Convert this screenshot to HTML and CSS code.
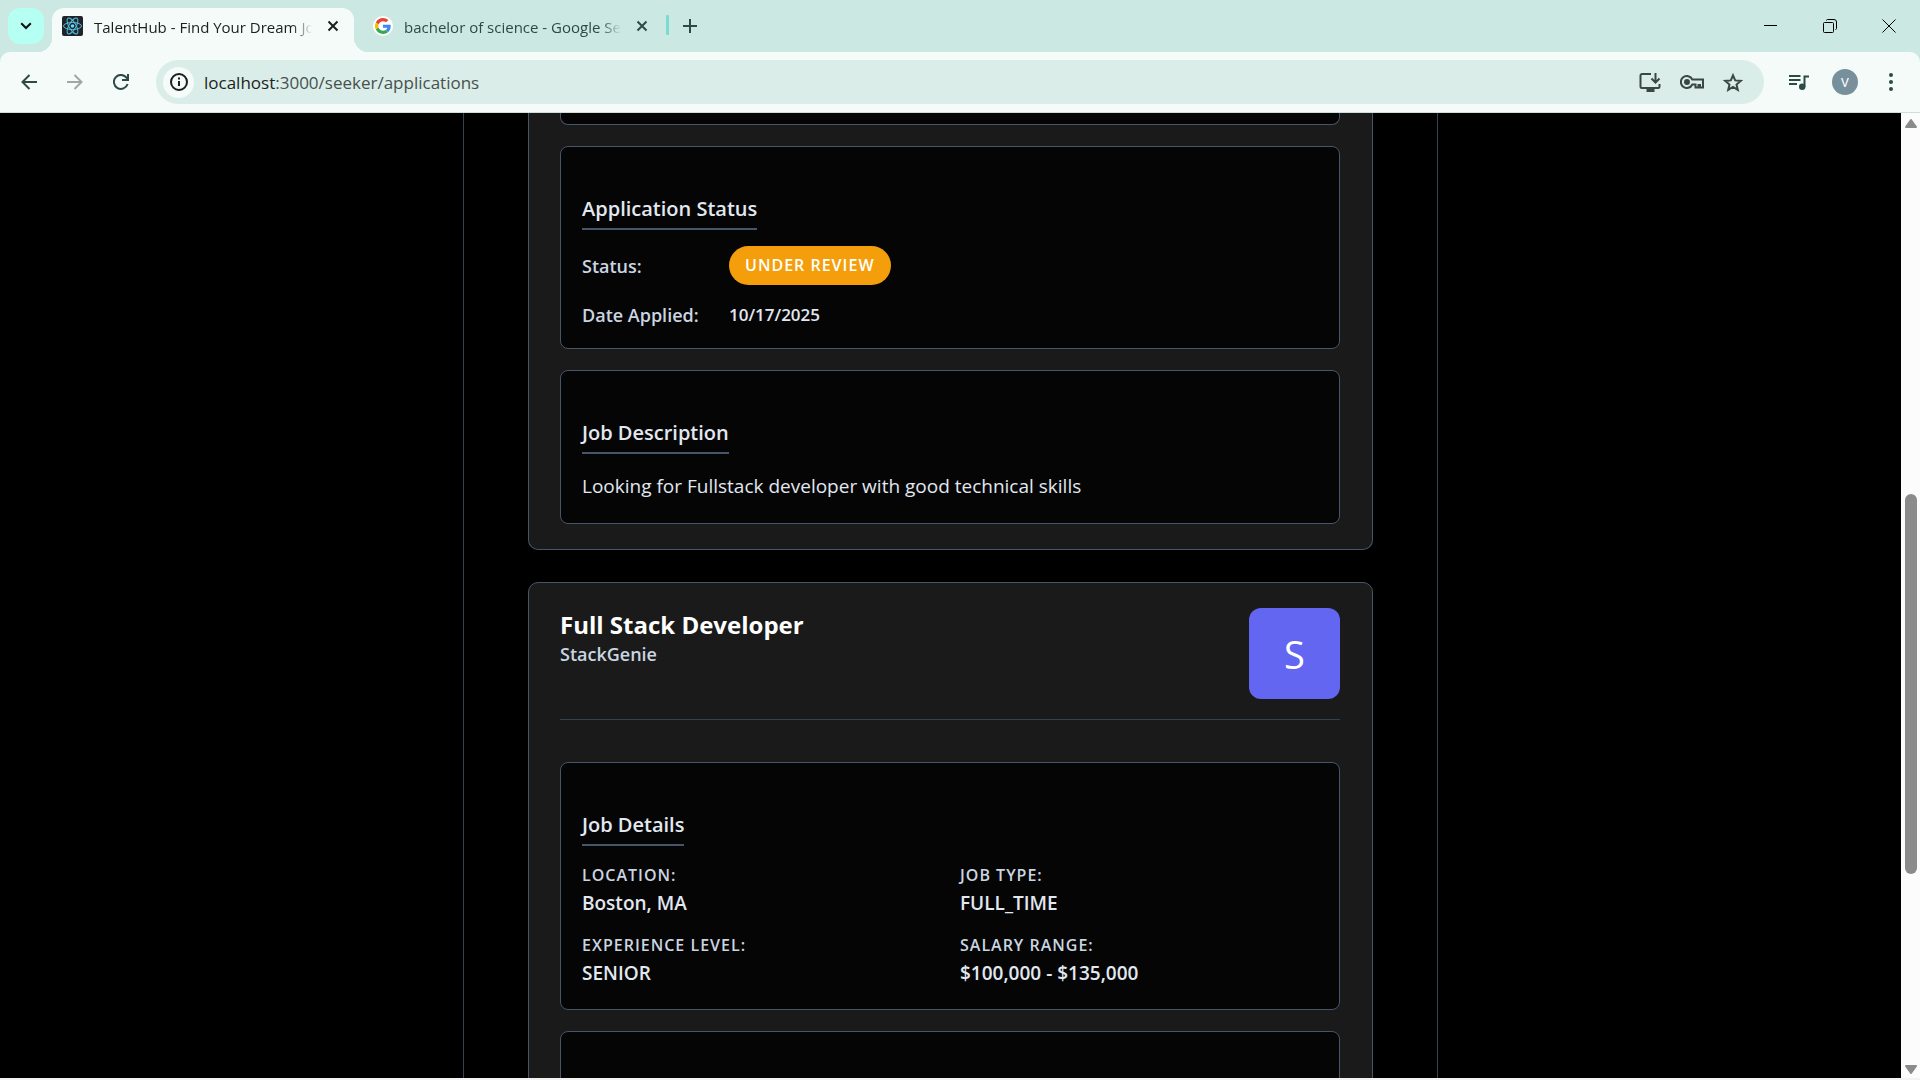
FILE: index.html
```html
<!DOCTYPE html>
<html lang="en">
<head>
  <meta charset="utf-8">
  <title>TalentHub - Find Your Dream Job</title>
  <link rel="stylesheet" href="styles.css">
</head>
<body>
  <div class="browser">
    <header class="tab-strip">
      <button class="tab-search" aria-label="Search tabs">
        <svg width="12" height="8" viewBox="0 0 12 8"><path d="M1.2 1.2 6 6l4.800-4.800" fill="none" stroke="currentColor" stroke-width="2"/></svg>
      </button>
      <div class="tab tab-active">
        <svg class="tab-icon" width="21" height="20" viewBox="0 0 21 20">
          <rect width="21" height="20" rx="2" fill="#20232a"/>
          <g fill="none" stroke="#53c1de" stroke-width="1">
            <ellipse cx="10.500" cy="10" rx="9" ry="3.500"/>
            <ellipse cx="10.500" cy="10" rx="9" ry="3.500" transform="rotate(60 10.500 10)"/>
            <ellipse cx="10.500" cy="10" rx="9" ry="3.500" transform="rotate(120 10.500 10)"/>
          </g>
          <circle cx="10.500" cy="10" r="1.800" fill="#61dafb"/>
        </svg>
        <span class="tab-title">TalentHub - Find Your Dream Job</span>
        <button class="tab-close" aria-label="Close tab">
          <svg width="12" height="12" viewBox="0 0 12 12"><path d="m1.500 1.500 9 9m0-9-9 9" stroke="currentColor" stroke-width="2"/></svg>
        </button>
      </div>
      <div class="tab tab-inactive">
        <span class="tab-icon google">
          <svg width="16" height="16" viewBox="0 0 48 48">
            <path fill="#ea4335" d="M24 9.500c3.500 0 6.700 1.200 9.200 3.600l6.900-6.900C35.900 2.400 30.500 0 24 0 14.600 0 6.500 5.400 2.600 13.200l8 6.200C12.400 13.700 17.700 9.500 24 9.500z"/>
            <path fill="#4285f4" d="M47 24.500c0-1.600-.2-3.100-.4-4.500H24v9h12.900c-.6 3-2.200 5.500-4.700 7.200l7.700 6C44.400 38 47 31.800 47 24.500z"/>
            <path fill="#fbbc05" d="M10.500 28.600A14.500 14.500 0 0 1 10.500 19.400l-8-6.200a24 24 0 0 0 0 21.600l8-6.200z"/>
            <path fill="#34a853" d="M24 48c6.500 0 11.900-2.100 15.900-5.800l-7.700-6c-2.200 1.500-4.900 2.300-8.200 2.300-6.300 0-11.600-4.200-13.500-9.900l-8 6.200C6.500 42.600 14.600 48 24 48z"/>
          </svg>
        </span>
        <span class="tab-title">bachelor of science - Google Search</span>
        <button class="tab-close" aria-label="Close tab">
          <svg width="12" height="12" viewBox="0 0 12 12"><path d="m1.500 1.500 9 9m0-9-9 9" stroke="currentColor" stroke-width="2"/></svg>
        </button>
      </div>
      <span class="tab-divider"></span>
      <button class="new-tab" aria-label="New tab">
        <svg width="14" height="14" viewBox="0 0 14 14"><path d="M7 0v14M0 7h14" stroke="currentColor" stroke-width="2"/></svg>
      </button>
      <div class="window-controls">
        <button aria-label="Minimize"><svg width="14" height="14" viewBox="0 0 14 14"><path d="M0 6.500h13" stroke="currentColor"/></svg></button>
        <button aria-label="Restore"><svg width="14" height="14" viewBox="0 0 14 14" fill="none" stroke="currentColor"><rect x=".5" y="3.500" width="10" height="10" rx="1"/><path d="M3.500 1.500c0-.6.400-1 1-1H11a2.500 2.500 0 0 1 2.500 2.500v6.500c0 .6-.4 1-1 1"/></svg></button>
        <button aria-label="Close"><svg width="14" height="14" viewBox="0 0 14 14"><path d="m.5.500 13 13m0-13-13 13" stroke="currentColor"/></svg></button>
      </div>
    </header>

    <nav class="toolbar" aria-label="Browser">
      <button class="nav-button" aria-label="Back">
        <svg width="16" height="16" viewBox="0 0 16 16" fill="none" stroke="currentColor" stroke-width="2"><path d="M16 8H2M8.500 1 1.500 8l7 7"/></svg>
      </button>
      <button class="nav-button muted" aria-label="Forward" disabled>
        <svg width="16" height="16" viewBox="0 0 16 16" fill="none" stroke="currentColor" stroke-width="2"><path d="M0 8h14M7.500 1l7 7-7 7"/></svg>
      </button>
      <button class="nav-button" aria-label="Reload">
        <svg width="16" height="16" viewBox="0 0 16 16" fill="none" stroke="currentColor" stroke-width="2"><path d="M14.600 10A7 7 0 1 1 13.500 3.700L15 5.500M15 0v6H9"/></svg>
      </button>
      <div class="address-bar">
        <button class="site-info" aria-label="Site information">
          <svg width="18" height="18" viewBox="0 0 18 18" fill="none" stroke="currentColor" stroke-width="2"><circle cx="9" cy="9" r="8"/><path d="M9 8v5M9 4.500v2"/></svg>
        </button>
        <input class="address" type="text" aria-label="Address" value="localhost:3000/seeker/applications">
        <span class="address-text" aria-hidden="true"><b>localhost</b>:3000/seeker/applications</span>
        <button class="bar-icon" aria-label="Install app">
          <svg width="22" height="19" viewBox="0 0 22 19" fill="none" stroke="currentColor" stroke-width="2"><path d="M12 1H3a1.500 1.500 0 0 0-1.500 1.500v11A1.500 1.500 0 0 0 3 15h16a1.500 1.500 0 0 0 1.500-1.500V11M16.500 0v9M12.500 5.500l4 4 4-4"/><path d="M7.500 17.500h8" stroke-width="3"/></svg>
        </button>
        <button class="bar-icon" aria-label="Passwords">
          <svg width="24" height="14" viewBox="0 0 24 14" fill="none" stroke="currentColor" stroke-width="2"><path d="M12.300 4.500A6 6 0 1 0 12.300 9.500H15.500V12.500h3V10h1.500v2.500h3v-8z"/><circle cx="7" cy="7" r="2" fill="currentColor"/></svg>
        </button>
        <button class="bar-icon" aria-label="Bookmark this tab">
          <svg width="20" height="19" viewBox="0 0 20 19" fill="none" stroke="currentColor" stroke-width="2"><path d="m10 2.300 2.200 5.100 5.500.5-4.200 3.600 1.300 5.400-4.800-2.900-4.800 2.900 1.300-5.400L2.300 7.900l5.500-.5z"/></svg>
        </button>
      </div>
      <button class="media" aria-label="Media controls">
        <svg width="20" height="15" viewBox="0 0 20 15"><path d="M0 1h11.500M0 5h11.500M0 9h8M15.500 12V1.500H20" fill="none" stroke="currentColor" stroke-width="2"/><circle cx="13.200" cy="11.700" r="3.200" fill="currentColor"/></svg>
      </button>
      <button class="profile" aria-label="Profile">V</button>
      <button class="menu" aria-label="Menu">
        <svg width="4" height="18" viewBox="0 0 4 18" fill="currentColor"><circle cx="2" cy="2" r="2"/><circle cx="2" cy="9" r="2"/><circle cx="2" cy="16" r="2"/></svg>
      </button>
    </nav>

    <div class="viewport">
      <main class="page">
        <div class="applications">
          <article class="card card-scrolled">
            <section class="panel panel-scrolled"></section>
            <section class="panel">
              <h4 class="panel-title">Application Status</h4>
              <dl class="status-list">
                <div class="status-row"><dt>Status:</dt><dd><span class="badge">UNDER REVIEW</span></dd></div>
                <div class="status-row"><dt>Date Applied:</dt><dd>10/17/2025</dd></div>
              </dl>
            </section>
            <section class="panel">
              <h4 class="panel-title">Job Description</h4>
              <p class="description">Looking for Fullstack developer with good technical skills</p>
            </section>
          </article>

          <article class="card">
            <header class="card-header">
              <div>
                <h3 class="job-title">Full Stack Developer</h3>
                <p class="company">StackGenie</p>
              </div>
              <div class="avatar">S</div>
            </header>
            <section class="panel">
              <h4 class="panel-title">Job Details</h4>
              <dl class="details">
                <div><dt>LOCATION:</dt><dd>Boston, MA</dd></div>
                <div><dt>JOB TYPE:</dt><dd>FULL_TIME</dd></div>
                <div><dt>EXPERIENCE LEVEL:</dt><dd>SENIOR</dd></div>
                <div><dt>SALARY RANGE:</dt><dd>$100,000 - $135,000</dd></div>
              </dl>
            </section>
            <section class="panel panel-next"></section>
          </article>
        </div>
      </main>
      <div class="scrollbar" aria-hidden="true">
        <svg width="12" height="9" viewBox="0 0 12 9"><path d="M6 1 11 8H1z" fill="#8b8b8b" stroke="#8b8b8b" stroke-width="2" stroke-linejoin="round"/></svg>
        <div class="track"><div class="thumb"></div></div>
        <svg width="12" height="9" viewBox="0 0 12 9"><path d="M6 8 11 1H1z" fill="#8b8b8b" stroke="#8b8b8b" stroke-width="2" stroke-linejoin="round"/></svg>
      </div>
    </div>
  </div>
</body>
</html>
```
FILE: styles.css
```css
* {
  box-sizing: border-box;
}

body,
h3,
h4,
p,
dl,
dd {
  margin: 0;
}

body {
  font-family: "Open Sans", "Noto Sans", sans-serif;
  background: #fff;
}

button {
  display: flex;
  align-items: center;
  justify-content: center;
  flex: none;
  padding: 0;
  border: 0;
  background: none;
  color: inherit;
  font: inherit;
}

svg {
  display: block;
  flex: none;
}

.browser {
  display: flex;
  flex-direction: column;
  height: 100vh;
  background: #cce8e2;
}

/* Tab strip */
.tab-strip {
  display: flex;
  align-items: center;
  flex: none;
  height: 52px;
  padding: 8px 2px 0 8px;
  color: #2d4a45;
}

.tab-search {
  align-self: flex-start;
  width: 36px;
  height: 36px;
  margin-right: 8px;
  border-radius: 12px;
  background: #b5fff3;
  color: #111;
}

.tab {
  display: flex;
  align-items: center;
  width: 302px;
  height: 44px;
  padding: 0 14px 8px 10px;
}

.tab-active {
  position: relative;
  border-radius: 12px 12px 0 0;
  background: #f4fbf9;
  color: #1b1f1e;
}

.tab-inactive {
  margin-left: 7px;
}

.tab-active::before,
.tab-active::after {
  content: "";
  position: absolute;
  bottom: 0;
  width: 14px;
  height: 14px;
}

.tab-active::before {
  right: 100%;
  background: radial-gradient(circle at 0 0, transparent 14px, #f4fbf9 14px);
}

.tab-active::after {
  left: 100%;
  background: radial-gradient(circle at 100% 0, transparent 14px, #f4fbf9 14px);
}

.tab-icon {
  flex: none;
  margin-right: 11px;
}

.google {
  display: flex;
  align-items: center;
  justify-content: center;
  width: 20px;
  height: 20px;
  margin-left: 2px;
  border-radius: 10px;
  background: #fff;
}

.tab-title {
  flex: 1;
  overflow: hidden;
  padding-top: 2px;
  white-space: nowrap;
  font-size: 15px;
  line-height: 20px;
  -webkit-mask-image: linear-gradient(to left, transparent, #000 20px);
  mask-image: linear-gradient(to left, transparent, #000 20px);
}

.tab-close {
  width: 14px;
  height: 20px;
  margin-left: 14px;
}

.tab-divider {
  align-self: flex-start;
  width: 3px;
  height: 20px;
  margin: 7px 14px 0 3px;
  border-radius: 1px;
  background: #7cdbd0;
}

.new-tab {
  height: 36px;
  margin-bottom: 8px;
}

.window-controls {
  display: flex;
  margin: 0 0 8px auto;
  color: #000;
}

.window-controls button {
  width: 59px;
  height: 36px;
}

/* Toolbar */
.toolbar {
  display: flex;
  align-items: center;
  flex: none;
  height: 61px;
  padding: 0 27px 0 6px;
  border-bottom: 1px solid #cfdedb;
  border-radius: 10px 10px 0 0;
  background: #f4fbf9;
  color: #2d4a45;
}

.nav-button {
  width: 46px;
  height: 40px;
}

.muted {
  color: #9fa8a6;
}

.address-bar {
  position: relative;
  display: flex;
  align-items: center;
  flex: 1;
  gap: 19px;
  height: 44px;
  margin: 0 25px 0 12px;
  padding: 0 21px 0 7px;
  border-radius: 22px;
  background: #daede8;
  color: #3b4745;
}

.site-info {
  width: 31px;
  height: 31px;
  border-radius: 16px;
  background: #f4fbf9;
  color: #1b1f1e;
}

.address {
  flex: 1;
  min-width: 0;
  padding: 0;
  border: 0;
  background: none;
  color: transparent;
  font: inherit;
  font-size: 17px;
}

.address-text {
  position: absolute;
  left: 48px;
  padding-top: 1px;
  font-size: 17px;
  line-height: 24px;
  color: #47504e;
  pointer-events: none;
}

.address-text b {
  font-weight: 400;
  color: #1b1f1e;
}

.profile {
  width: 26px;
  height: 26px;
  margin: 0 31px 0 23px;
  border-radius: 13px;
  background: #78909c;
  color: #fff;
  font-family: Roboto, sans-serif;
  font-size: 13px;
}

/* Page */
.viewport {
  display: flex;
  flex: 1;
  min-height: 0;
  border-bottom: 2px solid #f3f3f3;
  background: #000;
}

.page {
  flex: 1;
  min-width: 0;
  overflow: hidden;
}

.applications {
  max-width: 975px;
  min-height: 100%;
  margin: 0 auto;
  padding: 0 64px;
  border: solid #334155;
  border-width: 0 1px;
}

.card {
  display: flex;
  flex-direction: column;
  gap: 21px;
  margin-bottom: 32px;
  padding: 25px 32px 25px 31px;
  border: 1px solid #475569;
  border-radius: 10px;
  background: #1a1a1a;
}

.card-scrolled {
  padding-top: 0;
  border-top: 0;
  border-radius: 0 0 10px 10px;
}

.card-header {
  display: flex;
  justify-content: space-between;
  margin-bottom: 21px;
  padding-bottom: 20px;
  border-bottom: 1px solid #334155;
}

.job-title {
  font-size: 24px;
  line-height: 34px;
  font-weight: 700;
  color: #fff;
}

.company {
  font-size: 18px;
  line-height: 24px;
  font-weight: 600;
  color: #cbd5e1;
}

.avatar {
  display: flex;
  align-items: center;
  justify-content: center;
  width: 91px;
  height: 91px;
  border-radius: 12px;
  background: #6366f1;
  color: #fff;
  font-size: 38px;
}

.panel {
  padding: 48px 21px 21px;
  border: 1px solid #475569;
  border-radius: 8px;
  background: #050505;
}

.panel-scrolled {
  height: 12px;
  padding: 0;
  border-top: 0;
  border-radius: 0 0 8px 8px;
}

.panel-next {
  height: 200px;
}

.panel-title {
  width: fit-content;
  padding-bottom: 5px;
  border-bottom: 2px solid #475569;
  font-size: 20px;
  line-height: 28px;
  font-weight: 600;
  color: #e2e8f0;
}

.status-list {
  display: grid;
  gap: 18px;
  padding-top: 16px;
}

.status-row {
  display: flex;
  align-items: center;
  line-height: 24px;
  font-weight: 600;
}

.status-row dt {
  width: 147px;
  font-size: 18px;
  color: #cbd5e1;
}

.status-row dd {
  font-size: 17px;
  color: #e2e8f0;
}

.badge {
  display: block;
  padding: 7px 16px 8px;
  border-radius: 20px;
  background: #f59e0b;
  color: #fff;
  font-size: 16px;
  letter-spacing: 1px;
}

.description {
  padding-top: 16px;
  font-size: 19px;
  line-height: 32px;
  color: #e2e8f0;
}

.details {
  display: grid;
  grid-template-columns: 1fr 1fr;
  gap: 14px 20px;
  padding-top: 16px;
}

.details dt {
  font-size: 16px;
  line-height: 27px;
  font-weight: 600;
  letter-spacing: 1px;
  color: #cbd5e1;
}

.details dd {
  font-size: 19px;
  line-height: 29px;
  font-weight: 600;
  color: #e2e8f0;
}

/* Scrollbar */
.scrollbar {
  display: flex;
  flex-direction: column;
  align-items: center;
  width: 19px;
  padding: 6px 0 4px;
  background: #fcfcfc;
}

.track {
  display: flex;
  flex: 1;
  flex-direction: column;
}

.track::before {
  content: "";
  flex: 366;
}

.track::after {
  content: "";
  flex: 191;
}

.thumb {
  flex: 380;
  width: 12px;
  border-radius: 6px;
  background: #8b8b8b;
}
```
